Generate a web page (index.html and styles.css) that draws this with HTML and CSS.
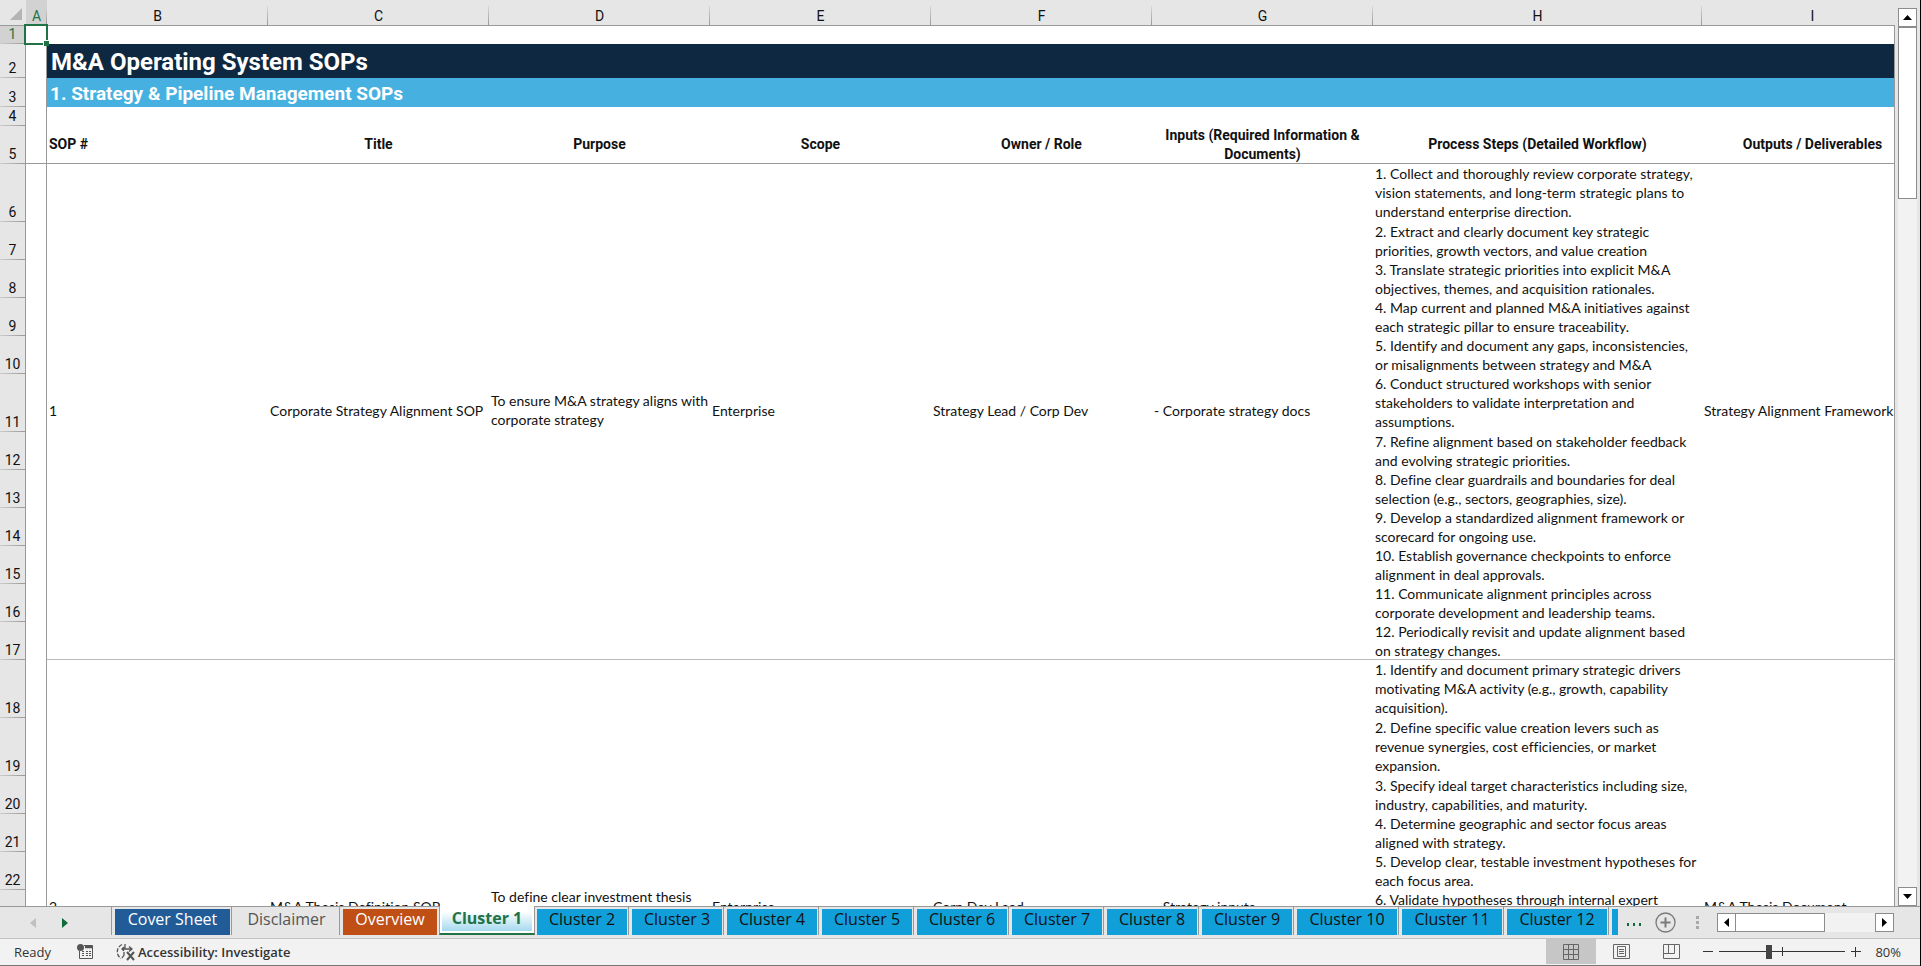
FILE: index.html
```html
<!DOCTYPE html>
<html lang="en">
<head>
<meta charset="utf-8">
<title>M&amp;A Operating System SOPs</title>
<link rel="stylesheet" href="styles.css">
</head>
<body>
  <main class="workarea">
    <div class="sheet">
      <table class="grid">
        <colgroup>
          <col class="w-head"><col class="w-a"><col class="w-std"><col class="w-std"><col class="w-std"><col class="w-std"><col class="w-std"><col class="w-std"><col class="w-steps"><col class="w-std">
        </colgroup>
        <thead>
          <tr>
            <th class="corner"><svg width="12" height="12" viewBox="0 0 12 12"><path d="M12 0V12H0Z" fill="#b4b4b4"/></svg></th>
            <th class="on">A</th><th>B</th><th>C</th><th>D</th><th>E</th><th>F</th><th>G</th><th>H</th><th>I</th>
          </tr>
        </thead>
        <tbody>
          <tr class="h18"><th class="on">1</th><td class="a active"><span class="cursor"></span></td><td colspan="8"></td></tr>
          <tr class="h34"><th>2</th><td class="a"></td><td class="title" colspan="8">M&amp;A Operating System SOPs</td></tr>
          <tr class="h29"><th>3</th><td class="a"></td><td class="subtitle" colspan="8">1. Strategy &amp; Pipeline Management SOPs</td></tr>
          <tr class="h19"><th>4</th><td class="a"></td><td colspan="8"></td></tr>
          <tr class="h38 labels">
            <th>5</th><td class="a"></td>
            <td class="left">SOP #</td><td>Title</td><td>Purpose</td><td>Scope</td><td>Owner / Role</td>
            <td class="double">Inputs (Required Information &amp;<br>Documents)</td>
            <td>Process Steps (Detailed Workflow)</td><td>Outputs / Deliverables</td>
          </tr>

          <!-- SOP 1 -->
          <tr class="h58">
            <th>6</th><td class="a"></td>
            <td class="end" rowspan="12">1</td>
            <td class="end" rowspan="12">Corporate Strategy Alignment SOP</td>
            <td class="end" rowspan="12">To ensure M&amp;A strategy aligns with<br>corporate strategy</td>
            <td class="end" rowspan="12">Enterprise</td>
            <td class="end" rowspan="12">Strategy Lead / Corp Dev</td>
            <td class="end" rowspan="12">- Corporate strategy docs</td>
            <td class="step">1. Collect and thoroughly review corporate strategy,<br>vision statements, and long-term strategic plans to<br>understand enterprise direction.</td>
            <td class="end" rowspan="12">Strategy Alignment Framework</td>
          </tr>
          <tr class="h38"><th>7</th><td class="a"></td><td class="step">2. Extract and clearly document key strategic<br>priorities, growth vectors, and value creation</td></tr>
          <tr class="h38"><th>8</th><td class="a"></td><td class="step">3. Translate strategic priorities into explicit M&amp;A<br>objectives, themes, and acquisition rationales.</td></tr>
          <tr class="h38"><th>9</th><td class="a"></td><td class="step">4. Map current and planned M&amp;A initiatives against<br>each strategic pillar to ensure traceability.</td></tr>
          <tr class="h38"><th>10</th><td class="a"></td><td class="step">5. Identify and document any gaps, inconsistencies,<br>or misalignments between strategy and M&amp;A</td></tr>
          <tr class="h58"><th>11</th><td class="a"></td><td class="step">6. Conduct structured workshops with senior<br>stakeholders to validate interpretation and<br>assumptions.</td></tr>
          <tr class="h38"><th>12</th><td class="a"></td><td class="step">7. Refine alignment based on stakeholder feedback<br>and evolving strategic priorities.</td></tr>
          <tr class="h38"><th>13</th><td class="a"></td><td class="step">8. Define clear guardrails and boundaries for deal<br>selection (e.g., sectors, geographies, size).</td></tr>
          <tr class="h38"><th>14</th><td class="a"></td><td class="step">9. Develop a standardized alignment framework or<br>scorecard for ongoing use.</td></tr>
          <tr class="h38"><th>15</th><td class="a"></td><td class="step">10. Establish governance checkpoints to enforce<br>alignment in deal approvals.</td></tr>
          <tr class="h38"><th>16</th><td class="a"></td><td class="step">11. Communicate alignment principles across<br>corporate development and leadership teams.</td></tr>
          <tr class="h38"><th>17</th><td class="a"></td><td class="step end">12. Periodically revisit and update alignment based<br>on strategy changes.</td></tr>

          <!-- SOP 2 -->
          <tr class="h58">
            <th>18</th><td class="a"></td>
            <td class="end" rowspan="12">2</td>
            <td class="end" rowspan="12">M&amp;A Thesis Definition SOP</td>
            <td class="end" rowspan="12">To define clear investment thesis<br>&nbsp;</td>
            <td class="end" rowspan="12">Enterprise</td>
            <td class="end" rowspan="12">Corp Dev Lead</td>
            <td class="end" rowspan="12">- Strategy inputs</td>
            <td class="step">1. Identify and document primary strategic drivers<br>motivating M&amp;A activity (e.g., growth, capability<br>acquisition).</td>
            <td class="end" rowspan="12">M&amp;A Thesis Document</td>
          </tr>
          <tr class="h58"><th>19</th><td class="a"></td><td class="step">2. Define specific value creation levers such as<br>revenue synergies, cost efficiencies, or market<br>expansion.</td></tr>
          <tr class="h38"><th>20</th><td class="a"></td><td class="step">3. Specify ideal target characteristics including size,<br>industry, capabilities, and maturity.</td></tr>
          <tr class="h38"><th>21</th><td class="a"></td><td class="step">4. Determine geographic and sector focus areas<br>aligned with strategy.</td></tr>
          <tr class="h38"><th>22</th><td class="a"></td><td class="step">5. Develop clear, testable investment hypotheses for<br>each focus area.</td></tr>
          <tr class="h38"><th></th><td class="a"></td><td class="step">6. Validate hypotheses through internal expert</td></tr>
          <tr class="h38"><th></th><td class="a"></td><td></td></tr>
          <tr class="h38"><th></th><td class="a"></td><td></td></tr>
          <tr class="h38"><th></th><td class="a"></td><td></td></tr>
          <tr class="h38"><th></th><td class="a"></td><td></td></tr>
          <tr class="h38"><th></th><td class="a"></td><td></td></tr>
          <tr class="h38"><th></th><td class="a"></td><td class="end"></td></tr>
        </tbody>
      </table>
    </div>
    <div class="vscroll">
      <button class="arrow" aria-label="Scroll up"><svg width="9" height="5" viewBox="0 0 9 5"><path d="M4.500 0L9 5H0Z"/></svg></button>
      <div class="vtrack"><div class="vthumb"></div></div>
      <button class="arrow" aria-label="Scroll down"><svg width="9" height="5" viewBox="0 0 9 5"><path d="M0 0H9L4.500 5Z"/></svg></button>
    </div>
  </main>

  <nav class="tabbar">
    <div class="tabnav">
      <button aria-label="Previous sheet"><svg width="6" height="10" viewBox="0 0 6 10"><path d="M6 0V10L0 5Z" fill="#c0c0c0"/></svg></button>
      <button aria-label="Next sheet"><svg width="6" height="10" viewBox="0 0 6 10"><path d="M0 0V10L6 5Z" fill="#0e6b38"/></svg></button>
    </div>
    <div class="tabs">
      <button class="tab navy">Cover Sheet</button>
      <button class="tab plain">Disclaimer</button>
      <button class="tab orange">Overview</button>
      <button class="tab current"><span>Cluster 1</span></button>
      <button class="tab first">Cluster 2</button>
      <button class="tab">Cluster 3</button>
      <button class="tab">Cluster 4</button>
      <button class="tab">Cluster 5</button>
      <button class="tab">Cluster 6</button>
      <button class="tab">Cluster 7</button>
      <button class="tab">Cluster 8</button>
      <button class="tab">Cluster 9</button>
      <button class="tab wide">Cluster 10</button>
      <button class="tab wide">Cluster 11</button>
      <button class="tab wide">Cluster 12</button>
      <button class="tab sliver" aria-label="Cluster 13"></button>
    </div>
    <button class="more" aria-label="More sheets"><svg width="14" height="3" viewBox="0 0 14 3" fill="#0e6b38"><path d="M0 0h2v3h-2zM6 0h2v3h-2zM12 0h2v3h-2z"/></svg></button>
    <button class="add" aria-label="New sheet"><svg width="21" height="21" viewBox="0 0 21 21" fill="none" stroke="#7a7a7a"><circle cx="10.500" cy="10.500" r="9.500" stroke-width="1.300"/><path d="M10.500 5.500V15.500M5.500 10.500H15.500" stroke-width="2"/></svg></button>
    <svg class="grip" width="3" height="13" viewBox="0 0 3 13" fill="#a8a8a8"><path d="M0 0h3v3h-3zM0 5h3v3h-3zM0 10h3v3h-3z"/></svg>
    <div class="hscroll">
      <button class="arrow" aria-label="Scroll left"><svg width="5" height="9" viewBox="0 0 5 9"><path d="M5 0V9L0 4.500Z"/></svg></button>
      <div class="htrack"><div class="hthumb"></div></div>
      <button class="arrow" aria-label="Scroll right"><svg width="5" height="9" viewBox="0 0 5 9"><path d="M0 0V9L5 4.500Z"/></svg></button>
    </div>
  </nav>

  <footer class="status">
    <span class="ready">Ready</span>
    <button class="macro" aria-label="Record macro">
      <svg width="16" height="15" viewBox="0 0 16 15" fill="none" stroke="#555"><path d="M7 1.500H15.500V14.500H2.500V7"/><path d="M8 3h7" stroke-width="2.500"/><path d="M5 7.500h2M9 7.500h2M12 7.500h2M5 9.500h2M9 9.500h2M12 9.500h2M5 11.500h2M9 11.500h2M12 11.500h2"/><circle cx="3.500" cy="3.500" r="3.500" fill="#555" stroke="none"/></svg>
    </button>
    <button class="access">
      <svg width="20" height="18" viewBox="0 0 20 18" fill="none" stroke="#555" stroke-width="1.300"><path d="M6 1.500A8 8 0 0 0 5 15.500" stroke-dasharray="4 1.500"/><path d="M9 1v5M6 6h10M8 4L6 6L8 8M13 3.500L16 6L13 8.500M8 9v3l-2 3"/><path d="M11 9L18 17M18 9L11 17" stroke-width="2"/></svg>
      Accessibility: Investigate
    </button>
    <div class="views">
      <button class="view chosen" aria-label="Normal"><svg width="16" height="16" viewBox="0 0 16 16" fill="none" stroke="#666"><path d="M.5.5H15.500V15.500H.5ZM5.500.5V15.500M10.500.5V15.500M.5 5.500H15.500M.5 10.500H15.500"/></svg></button>
      <button class="view" aria-label="Page layout"><svg width="17" height="15" viewBox="0 0 17 15" fill="none" stroke="#666"><path d="M.5.5H16.500V14.500H.5ZM4.500 2.500H12.500V12.500H4.500ZM6 5.500H11M6 7.500H11M6 9.500H11"/></svg></button>
      <button class="view" aria-label="Page break preview"><svg width="17" height="15" viewBox="0 0 17 15" fill="none" stroke="#666"><path d="M.5.5H16.500V14.500H.5ZM5.500.5V9.500M11.500.5V9.500M.5 9.500H11.500"/></svg></button>
    </div>
    <div class="zoom">
      <button aria-label="Zoom out"><svg width="10" height="10" viewBox="0 0 10 10" stroke="#333"><path d="M0 4.500H10"/></svg></button>
      <input class="slider" type="range" min="0" max="100" value="39" aria-label="Zoom">
      <button aria-label="Zoom in"><svg width="10" height="10" viewBox="0 0 10 10" stroke="#333"><path d="M0 4.500H10M4.500 0V10"/></svg></button>
      <button class="percent">80%</button>
    </div>
  </footer>
</body>
</html>
```
FILE: styles.css
```css
* {
  box-sizing: border-box;
}

body {
  margin: 0;
  height: 100vh;
  display: flex;
  flex-direction: column;
  overflow: hidden;
  background: #e6e6e6;
  border-right: 1px solid #000;
  font-family: "Open Sans", "Noto Sans", sans-serif;
}

button {
  margin: 0;
  padding: 0;
  border: 0;
  background: none;
  font: inherit;
  color: inherit;
  white-space: nowrap;
}

svg {
  display: block;
}

/* grid */
.workarea {
  flex: 1;
  min-height: 0;
  display: flex;
}

.sheet {
  flex: 1;
  min-width: 0;
  overflow: hidden;
  background: #fff;
}

.grid {
  table-layout: fixed;
  width: 1923px;
  border-spacing: 0;
  font-family: Lato, "Liberation Sans", sans-serif;
  font-size: 14px;
  font-variant-ligatures: none;
  line-height: 19px;
  color: #111;
}

.w-head { width: 26px; }
.w-a { width: 21px; }
.w-std { width: 221px; }
.w-steps { width: 329px; }

.grid th {
  padding: 0;
  background: #e6e6e6;
  font-family: Roboto, "Liberation Sans", sans-serif;
  font-size: 14px;
  font-weight: normal;
}

thead th {
  height: 26px;
  padding-top: 7px !important;
  line-height: 18px;
  border-bottom: 1px solid #999;
  background: linear-gradient(#d8d8d8, #999) right bottom / 1px 19px no-repeat #e6e6e6 !important;
}

thead th.on {
  background-color: #d2d2d2 !important;
  color: #217346;
}

thead .corner {
  padding: 3px 0 0 10px !important;
  background: #e6e6e6 !important;
}

tbody th {
  padding-bottom: 2px !important;
  vertical-align: bottom;
  line-height: 16px;
  border-right: 1px solid #999;
  background: linear-gradient(90deg, #ccc, #999) left bottom / 100% 1px no-repeat #e6e6e6 !important;
}

tbody th.on {
  background-color: #d2d2d2 !important;
  color: #217346;
}

.h18 { height: 18px; }
.h19 { height: 19px; }
.h29 { height: 29px; }
.h34 { height: 34px; }
.h38 { height: 38px; }
.h58 { height: 58px; }

.grid td {
  padding: 0 2px 2px;
  white-space: nowrap;
}

.grid .a {
  padding: 0;
  border-right: 1px solid #999;
}

.active {
  position: relative;
}

.cursor {
  position: absolute;
  inset: -2px -2px -1px -2px;
  border: 2px solid #217346;
}

.cursor::after {
  content: "";
  position: absolute;
  right: -3px;
  bottom: -3px;
  width: 5px;
  height: 5px;
  border: solid #fff;
  border-width: 1px 0 0 1px;
  background: #217346;
}

.grid .title {
  padding: 2px 4px 0;
  background: #0f2841;
  color: #fff;
  font-family: Roboto, "Liberation Sans", sans-serif;
  font-size: 24px;
  font-weight: bold;
  line-height: 32px;
}

.grid .subtitle {
  padding: 2px 3px 0;
  background: #46b1e1;
  color: #fff;
  font-family: Roboto, "Liberation Sans", sans-serif;
  font-size: 19px;
  font-weight: bold;
  line-height: 27px;
}

.labels td {
  text-align: center;
  font-family: Roboto, "Liberation Sans", sans-serif;
  font-weight: bold;
  box-shadow: inset 0 -1px #999;
}

.labels .left {
  text-align: left;
}

.grid .double {
  padding-bottom: 0;
}

.grid .end {
  padding-bottom: 4px;
  box-shadow: inset 0 -1px #bbb;
}

.grid .step {
  padding-bottom: 0;
  vertical-align: top;
}

/* scroll bars */
.arrow {
  display: flex;
  align-items: center;
  justify-content: center;
  width: 19px;
  height: 19px;
  flex: none;
  border: 1px solid #8c8c8c;
  background: #fff;
}

.vscroll {
  width: 26px;
  display: flex;
  flex-direction: column;
  padding: 8px 3px 0 4px;
  background: linear-gradient(#999, #999) 0 25px / 1px 100% no-repeat;
}

.vtrack {
  flex: 1;
  background: #f2f2f2;
}

.vthumb {
  height: 20%;
  border: 1px solid #8c8c8c;
  background: #fff;
}

.hscroll {
  display: flex;
  width: 177px;
}

.htrack {
  flex: 1;
  background: #f2f2f2;
}

.hthumb {
  width: 64%;
  height: 19px;
  border: 1px solid #8c8c8c;
  border-left: 0;
  background: #fff;
}

/* sheet tabs */
.tabbar {
  display: flex;
  align-items: center;
  height: 33px;
  padding-right: 26px;
  border-top: 1px solid #999;
  border-bottom: 1px solid #c4c4c4;
  font-size: 16px;
}

.tabnav {
  display: flex;
  gap: 26px;
  width: 112px;
  padding-left: 30px;
}

.tabs {
  display: flex;
  align-self: flex-start;
  height: 31px;
}

.tab {
  width: 95px;
  height: 28px;
  padding: 0 0 5px;
  border: solid #e6e6e6;
  border-width: 2px 2px 0 3px;
  background: #119fda;
  line-height: 21px;
  color: #111;
  box-shadow: -1px 0 #999;
}

.tab.navy {
  width: 120px;
  background: #215c98;
  color: #fff;
}

.tab.plain {
  width: 108px;
  background: none;
  color: #555;
}

.tab.orange {
  width: 99px;
  background: #c04f15;
  color: #fff;
}

.tab.current {
  width: 96px;
  height: 29px;
  margin-top: -1px;
  padding: 2px 2px 2px;
  border: solid #999;
  border-width: 0 1px;
  border-bottom: 2px solid #217346;
  background: #fff;
  box-shadow: none;
  color: #217346;
  font-weight: bold;
}

.current span {
  display: block;
  padding-bottom: 3px;
  line-height: 20px;
  background: linear-gradient(#fff 15%, #a6d9ef);
}

.tab.first {
  width: 94px;
  border-left-width: 2px;
  box-shadow: none;
}

.tab.wide {
  width: 105px;
}

.tab.sliver {
  width: 9px;
  border-right: 0;
}

.more {
  margin: 4px auto 0 9px;
}

.add {
  margin-right: 20px;
}

.grip {
  margin-right: 18px;
}

/* status bar */
.status {
  display: flex;
  align-items: center;
  height: 27px;
  padding: 0 19px 1px 14px;
  border-bottom: 1px solid #777;
  background: #f2f2f2;
  font-size: 13px;
  color: #333;
}

.macro {
  margin: 0 23px 0 26px;
}

.access {
  display: flex;
  align-items: center;
  gap: 2px;
  font-weight: 600;
}

.views {
  display: flex;
  align-self: stretch;
  margin-left: auto;
}

.view {
  display: flex;
  align-items: center;
  justify-content: center;
  width: 50px;
}

.chosen {
  background: #c6c6c6;
}

.zoom {
  display: flex;
  align-items: center;
  gap: 6px;
  padding-left: 7px;
}

.slider {
  appearance: none;
  width: 126px;
  height: 15px;
  margin: 0;
  background:
    linear-gradient(#333, #333) center / 1px 9px no-repeat,
    linear-gradient(#333, #333) center / 100% 1px no-repeat;
}

.slider::-webkit-slider-thumb {
  appearance: none;
  width: 6px;
  height: 14px;
  background: #444;
}

.percent {
  width: 34px;
  text-align: right;
}
```
